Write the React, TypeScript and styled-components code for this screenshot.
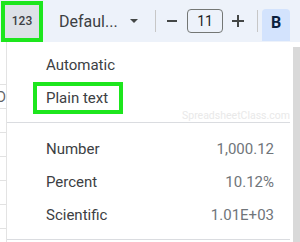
import React from 'react';
import styled, { createGlobalStyle } from 'styled-components';

const GlobalStyle = createGlobalStyle`
  html, body {
    margin: 0;
    padding: 0;
    background: #ffffff;
  }
  body {
    font-family: Roboto, "Liberation Sans", Arial, sans-serif;
  }
`;

const Page = styled.div`
  width: 300px;
  height: 242px;
  overflow: hidden;
  display: flex;
  flex-direction: column;
  background: #ffffff;
`;

const Toolbar = styled.div`
  height: 42px;
  flex-shrink: 0;
  display: flex;
  align-items: center;
  padding-left: 1px;
  background: #edf2fa;
  color: #444746;
`;

const Highlight = styled.div<{ $w: number; $h: number }>`
  box-sizing: border-box;
  width: ${(p) => p.$w}px;
  height: ${(p) => p.$h}px;
  border: 4px solid #1de61d;
  display: flex;
  align-items: center;
`;

const NumButton = styled.div`
  flex: 1;
  align-self: stretch;
  display: flex;
  align-items: center;
  justify-content: center;
  background: #dde1e7;
  font-size: 12px;
  font-weight: 500;
  color: #3c4043;
`;

const FontName = styled.span`
  margin-left: 16px;
  font-size: 16px;
  color: #3c4043;
  width: 56px;
  white-space: nowrap;
`;

const Caret = styled.span`
  margin-left: 15px;
  width: 0;
  height: 0;
  border-left: 4px solid transparent;
  border-right: 4px solid transparent;
  border-top: 4px solid #444746;
`;

const Divider = styled.span<{ $ml: number }>`
  margin-left: ${(p) => p.$ml}px;
  width: 1px;
  height: 22px;
  background: #c7c7c7;
`;

const Glyph = styled.span<{ $ml: number }>`
  margin-left: ${(p) => p.$ml}px;
  width: 12px;
  height: 12px;
  display: flex;
  align-items: center;
  justify-content: center;
`;

const SizeBox = styled.div`
  box-sizing: border-box;
  margin-left: 9px;
  width: 36px;
  height: 24px;
  border: 1px solid #747775;
  border-radius: 4px;
  display: flex;
  align-items: center;
  justify-content: center;
  font-size: 14px;
  color: #1f1f1f;
`;

const BoldButton = styled.div`
  margin-left: 4px;
  width: 28px;
  height: 32px;
  margin-top: 8px;
  border-radius: 4px 4px 0 0;
  background: #d3e3fd;
  display: flex;
  align-items: center;
  justify-content: center;
  padding-bottom: 6px;
  box-sizing: border-box;
  font-size: 16px;
  font-weight: 700;
  color: #0b1f3f;
`;

const Body = styled.div`
  flex: 1;
  display: flex;
`;

const SheetEdge = styled.div`
  width: 6px;
  display: flex;
  flex-direction: column;
  overflow: hidden;
`;

const SheetRow = styled.div<{ $h: number }>`
  height: ${(p) => p.$h}px;
  flex-shrink: 0;
  border-bottom: 1px solid #e2e2e2;
  box-sizing: border-box;
  font-size: 14px;
  color: #5f6368;
  display: flex;
  align-items: center;
  justify-content: flex-end;
  white-space: nowrap;
`;

const Menu = styled.div`
  position: relative;
  width: 287px;
  box-sizing: border-box;
  border-left: 1px solid #e3e3e3;
  background: #ffffff;
  display: flex;
  flex-direction: column;
  padding-top: 6px;
`;

const Item = styled.div`
  height: 33px;
  display: flex;
  align-items: center;
  justify-content: space-between;
  padding: 0 19px 0 39px;
  font-size: 15px;
  color: #3c4043;
`;

const PlainBox = styled.span`
  box-sizing: border-box;
  margin-left: -13px;
  margin-top: 1px;
  width: 90px;
  height: 32px;
  border: 4px solid #1de61d;
  padding-left: 9px;
  display: flex;
  align-items: center;
`;

const Value = styled.span`
  color: #70757a;
`;

const Separator = styled.div<{ $mt: number; $mb: number }>`
  height: 1px;
  margin: ${(p) => p.$mt}px 3px ${(p) => p.$mb}px 0;
  background: #dadce0;
`;

const Watermark = styled.span`
  position: absolute;
  left: 175px;
  top: 67px;
  font-size: 10.5px;
  color: #e9e9e9;
  white-space: nowrap;
`;

const Scroll = styled.div`
  width: 7px;
  margin-top: 5px;
  background: #d9d9d9;
`;

const Minus = () => (
  <svg width="12" height="12" viewBox="0 0 12 12">
    <rect x="1" y="5" width="10" height="2" fill="#444746" />
  </svg>
);

const Plus = () => (
  <svg width="12" height="12" viewBox="0 0 12 12">
    <rect x="0" y="5" width="12" height="2" fill="#444746" />
    <rect x="5" y="0" width="2" height="12" fill="#444746" />
  </svg>
);

const rows = [43, 24, 24, 24, 24, 24, 24, 24];

export default function App() {
  return (
    <>
      <GlobalStyle />
      <Page>
        <Toolbar>
          <Highlight $w={42} $h={41}>
            <NumButton>123</NumButton>
          </Highlight>
          <FontName>Defaul...</FontName>
          <Caret />
          <Divider $ml={17} />
          <Glyph $ml={10}>
            <Minus />
          </Glyph>
          <SizeBox>11</SizeBox>
          <Glyph $ml={9}>
            <Plus />
          </Glyph>
          <Divider $ml={13} />
          <BoldButton>B</BoldButton>
        </Toolbar>
        <Body>
          <SheetEdge>
            {rows.map((h, i) => (
              <SheetRow key={i} $h={h}>
                {i === 1 ? 'D' : ''}
              </SheetRow>
            ))}
          </SheetEdge>
          <Menu>
            <Item>Automatic</Item>
            <Item>
              <PlainBox>Plain text</PlainBox>
            </Item>
            <Separator $mt={8} $mb={9} />
            <Item>
              <span>Number</span>
              <Value>1,000.12</Value>
            </Item>
            <Item>
              <span>Percent</span>
              <Value>10.12%</Value>
            </Item>
            <Item>
              <span>Scientific</span>
              <Value>1.01E+03</Value>
            </Item>
            <Separator $mt={8} $mb={0} />
            <Watermark>SpreadsheetClass.com</Watermark>
          </Menu>
          <Scroll />
        </Body>
      </Page>
    </>
  );
}
